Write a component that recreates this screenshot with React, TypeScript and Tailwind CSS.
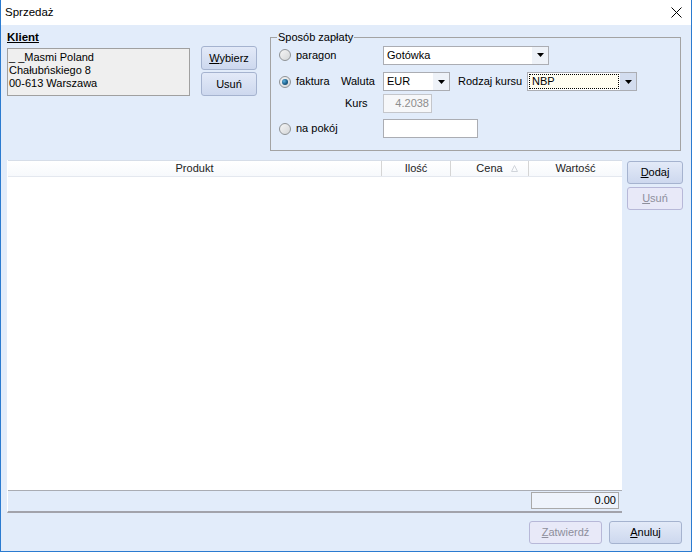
import type { ReactNode } from "react";

const Radio = ({ checked }: { checked?: boolean }) => (
  <span className="w-[12px] h-[12px] rounded-full border border-[#8f9396] bg-gradient-to-br from-[#f6f6f6] to-[#d4d6d8] flex items-center justify-center shrink-0">
    {checked && (
      <span className="w-[6px] h-[6px] rounded-full bg-[radial-gradient(circle_at_35%_35%,#5fb2df,#1b5f8a_55%,#0d3a58)]" />
    )}
  </span>
);

const Arrow = () => (
  <svg width="7" height="4" viewBox="0 0 7 4">
    <path d="M0 0h7L3.5 4z" fill="#000" />
  </svg>
);

const Combo = ({
  value,
  w,
  focus,
}: {
  value: string;
  w: string;
  focus?: boolean;
}) => (
  <div className={`${w} h-[19px] flex items-stretch bg-white border border-[#abadb3]`}>
    <div className="flex-1 flex items-center p-[1px]">
      <div
        className={`flex-1 h-full flex items-center pl-[2px] ${
          focus ? "border border-dotted border-black bg-[#fffdf0]" : ""
        }`}
      >
        {value}
      </div>
    </div>
    <div
      className={`w-[16px] flex items-center justify-center ${
        focus ? "bg-[#d3ddef]" : "bg-[#eef2f8]"
      }`}
    >
      <Arrow />
    </div>
  </div>
);

const Btn = ({
  children,
  w,
  h,
  disabled,
}: {
  children: ReactNode;
  w: string;
  h: string;
  disabled?: boolean;
}) => (
  <div
    className={`${w} ${h} rounded-[3px] border flex items-center justify-center ${
      disabled
        ? "border-[#b7b8d8] bg-[#e8e9f8] text-[#8e8f9c]"
        : "border-[#a5b3cf] bg-gradient-to-b from-[#e3eaf8] to-[#cdd8ee] text-black"
    }`}
  >
    {children}
  </div>
);

export default function App() {
  return (
    <div className="w-[692px] h-[552px] flex flex-col border-x border-b border-[#2b7bd0] bg-[#e2ecfa] font-['Liberation_Sans',Arial,sans-serif] text-[11px] leading-[13px] text-black">
      {/* title bar */}
      <div className="h-[25px] shrink-0 bg-white flex items-center justify-between pl-[4px] pr-[9px]">
        <span className="text-[11.5px]">Sprzedaż</span>
        <svg width="11" height="11" viewBox="0 0 11 11">
          <path d="M0.5 0.5l10 10M10.5 0.5l-10 10" stroke="#000" strokeWidth="1" />
        </svg>
      </div>

      {/* top section */}
      <div className="h-[130px] shrink-0 flex pl-[6px]">
        <div className="w-[183px] pt-[6px]">
          <div className="font-bold underline h-[13px] text-[11.5px]">Klient</div>
          <div className="mt-[4px] h-[48px] border border-[#a0a0a0] bg-[#efefef] pl-[1px] pt-[2px]">
            <div>_ _Masmi Poland</div>
            <div>Chałubńskiego 8</div>
            <div>00-613 Warszawa</div>
          </div>
        </div>

        <div className="ml-[11px] pt-[21px] flex flex-col gap-[2px]">
          <Btn w="w-[56px]" h="h-[24px]">
            <span>
              <span className="underline">W</span>ybierz
            </span>
          </Btn>
          <Btn w="w-[56px]" h="h-[24px]">
            Usuń
          </Btn>
        </div>

        <fieldset className="ml-[13px] mt-[6px] w-[411px] h-[120px] border border-[#a3a3a3] m-0 p-0">
          <legend className="ml-[6px] px-[1px] leading-[13px]">Sposób zapłaty</legend>

          <div className="mt-[1px] h-[20px] flex items-center">
            <div className="w-[112px] pl-[8px] flex items-center gap-[5px]">
              <Radio />
              <span>paragon</span>
            </div>
            <Combo value="Gotówka" w="w-[166px]" />
          </div>

          <div className="mt-[7px] h-[19px] flex items-center">
            <div className="w-[70px] pl-[8px] flex items-center gap-[5px]">
              <Radio checked />
              <span>faktura</span>
            </div>
            <span className="w-[42px]">Waluta</span>
            <Combo value="EUR" w="w-[67px]" />
            <span className="ml-[8px] w-[69px]">Rodzaj kursu</span>
            <Combo value="NBP" w="w-[110px]" focus />
          </div>

          <div className="mt-[3px] h-[19px] flex items-center">
            <span className="w-[112px] pl-[74px]">Kurs</span>
            <div className="w-[49px] h-[19px] border border-[#c4c6cb] bg-[#f6f7f9] text-[#8d8d8d] flex items-center justify-end pr-[2px]">
              4.2038
            </div>
          </div>

          <div className="mt-[6px] h-[19px] flex items-center">
            <div className="w-[112px] pl-[8px] flex items-center gap-[5px]">
              <Radio />
              <span>na pokój</span>
            </div>
            <div className="w-[95px] h-[19px] border border-[#abadb3] bg-white" />
          </div>
        </fieldset>
      </div>

      {/* table section */}
      <div className="mt-[5px] h-[353px] shrink-0 flex pl-[6px]">
        <div className="w-[615px] h-full flex flex-col border-l border-white border-b-2 border-b-[#a2a3ab]">
          <div className="h-[17px] shrink-0 flex bg-gradient-to-b from-white to-[#f7f9fc] border-t border-[#d6dde8] border-b border-b-[#e4e8ef] text-[#222]">
            <div className="w-[374px] flex items-center justify-center border-r border-[#d5d5d5]">Produkt</div>
            <div className="w-[69px] flex items-center justify-center border-r border-[#d5d5d5]">Ilość</div>
            <div className="w-[78px] flex items-center justify-center relative border-r border-[#d5d5d5]">
              Cena
              <svg className="absolute right-[10px] top-[4px]" width="7" height="7" viewBox="0 0 7 7">
                <path d="M3.5 0.5L0.5 6.5h6z" fill="none" stroke="#d0d4da" />
              </svg>
            </div>
            <div className="flex-1 flex items-center justify-center">Wartość</div>
          </div>
          <div className="flex-1 bg-white" />
          <div className="h-[21px] shrink-0 border-t border-[#a9acb3] flex justify-end pr-[3px] pt-[1px]">
            <div className="w-[88px] h-[17px] border border-[#a9a9a9] bg-[#eef3fb] flex items-center justify-end pr-[2px]">
              0.00
            </div>
          </div>
        </div>

        <div className="ml-[5px] mt-[1px] flex flex-col gap-[3px]">
          <Btn w="w-[56px]" h="h-[23px]">
            <span>
              <span className="underline">D</span>odaj
            </span>
          </Btn>
          <Btn w="w-[56px]" h="h-[23px]" disabled>
            <span>
              <span className="underline">U</span>suń
            </span>
          </Btn>
        </div>
      </div>

      {/* bottom buttons */}
      <div className="mt-[8px] flex justify-end gap-[7px] pr-[9px]">
        <Btn w="w-[73px]" h="h-[23px]" disabled>
          <span>
            <span className="underline">Z</span>atwierdź
          </span>
        </Btn>
        <Btn w="w-[73px]" h="h-[23px]">
          <span>
            <span className="underline">A</span>nuluj
          </span>
        </Btn>
      </div>
    </div>
  );
}
